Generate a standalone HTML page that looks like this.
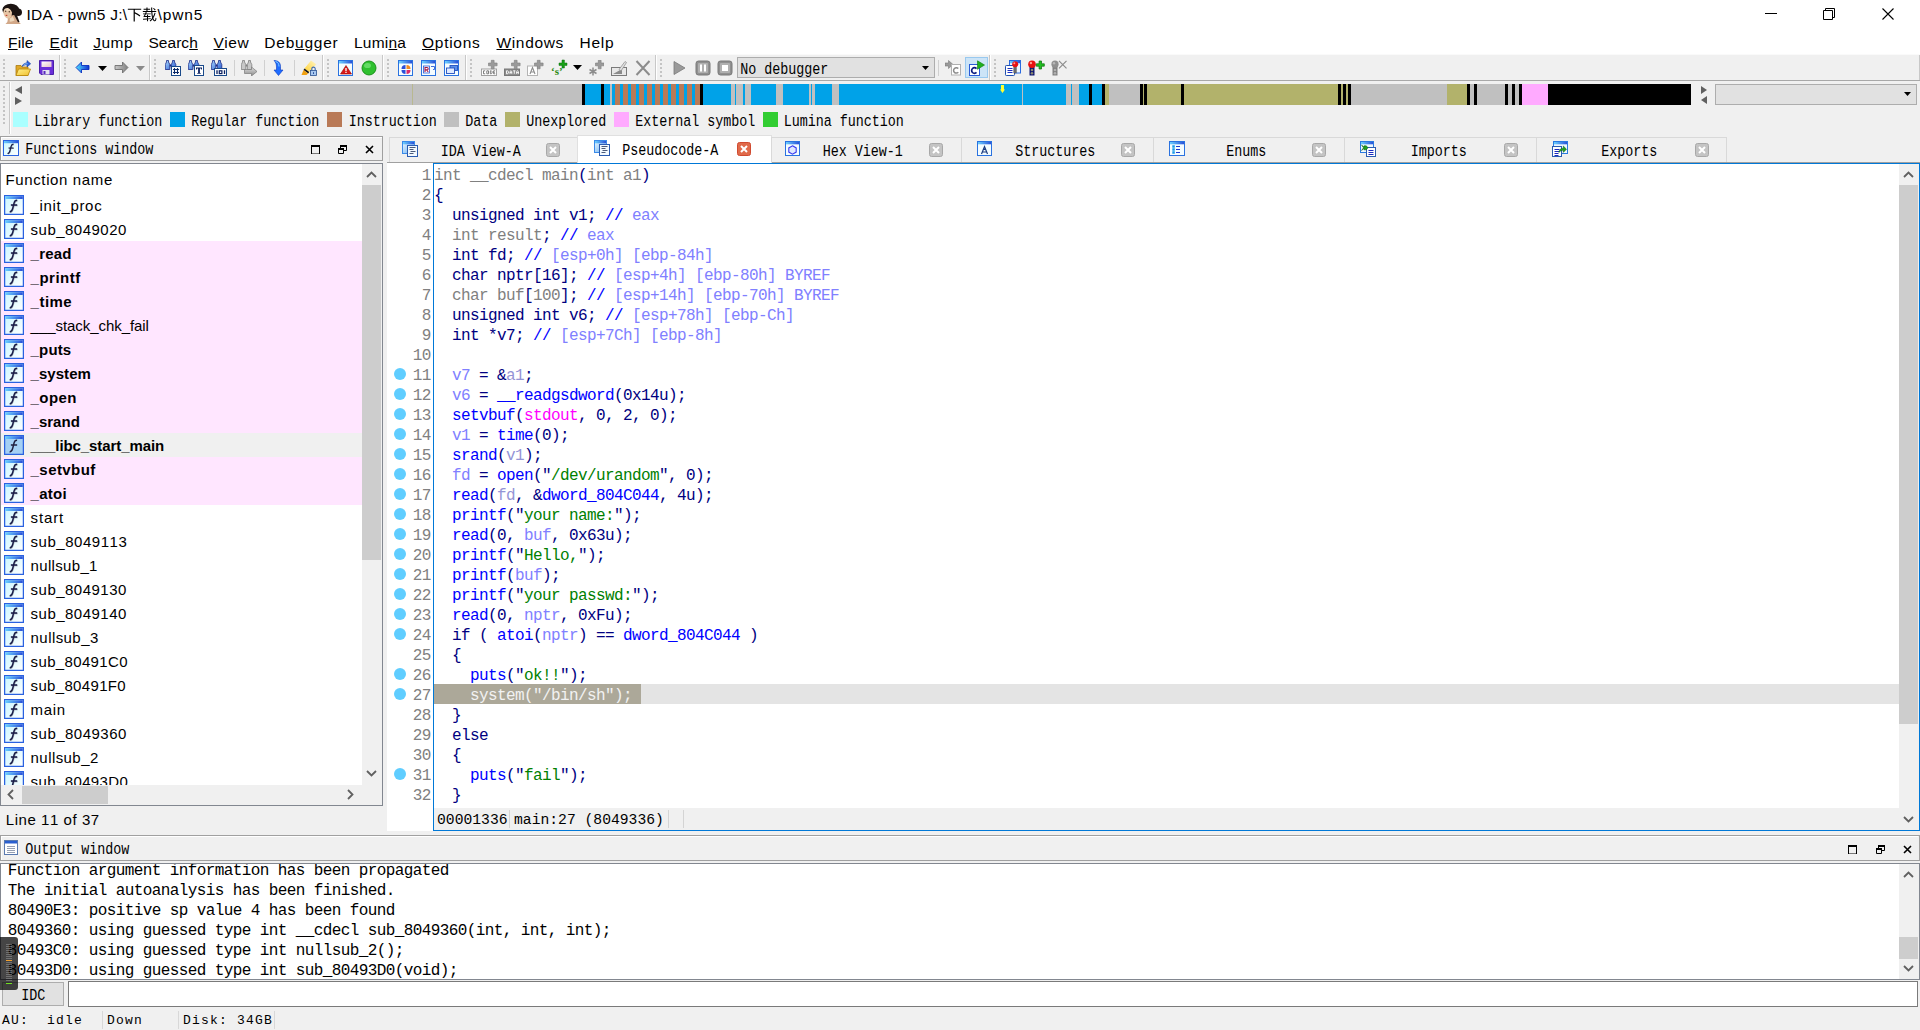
<!DOCTYPE html><html><head><meta charset="utf-8"><title>IDA - pwn5</title><style>
*{box-sizing:border-box;margin:0;padding:0}
html,body{width:1920px;height:1030px;overflow:hidden;background:#f0f0f0}
body{position:relative;font-family:"Liberation Sans",sans-serif;color:#000}
.a{position:absolute}
.t{position:absolute;white-space:pre}
.ui{font-family:"Liberation Sans",sans-serif}
.mono{font-family:"Liberation Mono",monospace}
.ss{font-family:"Liberation Mono",monospace;font-size:13.4px;letter-spacing:-.04px;transform:scaleY(1.17);transform-origin:0 13.6px;margin-top:2.700px;margin-left:-.7px}
.ui{font-kerning:none}
.code{font-family:"Liberation Mono",monospace;font-size:16px;letter-spacing:-.602px;line-height:20px;height:20px}
.G{color:#808080}.N{color:#000080}.B{color:#0000ff}.P{color:#8080ff}.S{color:#008000}.M{color:#ff00ff}.Q{color:#9494d6}.W{color:#f2f2f2}
u{text-decoration:underline;text-underline-offset:.8px;text-decoration-thickness:1px}
</style></head><body>
<svg width="0" height="0" style="position:absolute"><defs><linearGradient id="gbar" x1="0" x2="1"><stop offset="0" stop-color="#6ad0ff"/><stop offset="1" stop-color="#2a50d8"/></linearGradient><linearGradient id="gbino" x1="0" x2="1" y1="0" y2="1"><stop offset="0" stop-color="#a8d8ff"/><stop offset="1" stop-color="#2a5ad0"/></linearGradient><linearGradient id="ggray" x1="0" x2="0" y1="0" y2="1"><stop offset="0" stop-color="#e0e0e0"/><stop offset="1" stop-color="#8a8a8a"/></linearGradient><linearGradient id="gback" x1="0" x2="1"><stop offset="0" stop-color="#50e0ff"/><stop offset="1" stop-color="#1030d0"/></linearGradient><linearGradient id="gfold" x1="0" x2="1" y1="0" y2="1"><stop offset="0" stop-color="#fff08a"/><stop offset="1" stop-color="#f0c030"/></linearGradient><linearGradient id="glabel" x1="0" x2="1" y1="0" y2="1"><stop offset="0" stop-color="#ffffff"/><stop offset="1" stop-color="#e8c0c8"/></linearGradient><linearGradient id="ggray2" x1="0" x2="1"><stop offset="0" stop-color="#c8c8c8"/><stop offset="1" stop-color="#808080"/></linearGradient><linearGradient id="ghil" x1="1" x2="0" y1="0" y2="1"><stop offset="0" stop-color="#fff6c8"/><stop offset="1" stop-color="#ffd030"/></linearGradient><linearGradient id="gdoc" x1="0" x2="1" y1="0" y2="1"><stop offset="0" stop-color="#f0f8ff"/><stop offset="1" stop-color="#62aef2"/></linearGradient><linearGradient id="gfic" x1="0" x2="1" y1="0" y2="1"><stop offset="0" stop-color="#c8f6ff"/><stop offset="1" stop-color="#ffffff"/></linearGradient></defs></svg>
<div class="a" style="left:0;top:0;width:1920px;height:54px;background:#fff"></div>
<svg class="a" style="left:0;top:0" width="24" height="26" viewBox="0 0 24 26"><path d="M7.800 17l5.700-3 5.500 8q1 1.700 2 2H5.500q2.500-1.500 2.300-4.500z" fill="#d2a888"/><path d="M9.800 18.500q2-1 2.800-2.500l2 4.500q-2.800 1.500-5 1z" fill="#eed8bc"/><ellipse cx="10.800" cy="9.600" rx="8.400" ry="5.800" fill="#1c1412"/><circle cx="18.200" cy="12.200" r="3.800" fill="#1c1412"/><path d="M13 13l3.500 1 3 8-1.500.3z" fill="#1c1412"/><ellipse cx="7.700" cy="12.500" rx="4.300" ry="6" transform="rotate(-6 7.700 12.500)" fill="#e6c4a4"/><ellipse cx="7" cy="9.300" rx="2.800" ry="2" fill="#f0d8bc"/><path d="M2.600 11.500Q2.800 6.500 8 5.600q3.300-.3 4.800 2.800l-.3 6q-.8-5-4.500-6.300-3.300-.6-4.700 3.100z" fill="#1c1412"/><circle cx="5.700" cy="11.300" r=".7" fill="#4a3426"/><circle cx="9.300" cy="11.700" r=".7" fill="#4a3426"/><path d="M5.700 15.400h1.600" stroke="#c03828" stroke-width="1.100"/></svg>
<div class="t ui" id="title" style="left:26.500px;top:4.100px;font-size:15.500px;line-height:22px;letter-spacing:0.251px">IDA - pwn5 J:\</div>
<svg class="a" style="left:127px;top:6.500px" width="30" height="15.900" viewBox="0 0 2000 1060"><g transform="translate(0,880) scale(1,-1)"><path d="M55 766V691H441V-79H520V451C635 389 769 306 839 250L892 318C812 379 653 469 534 527L520 511V691H946V766Z"/><path transform="translate(1000,0)" d="M736 784C782 745 835 690 858 653L915 693C890 730 836 783 790 819ZM839 501C813 406 776 314 729 231C710 319 697 428 689 553H951V614H686C683 685 682 760 683 839H609C609 762 611 686 614 614H368V700H545V760H368V841H296V760H105V700H296V614H54V553H617C627 394 646 253 676 145C627 75 571 15 507 -31C525 -44 547 -66 560 -82C613 -41 661 9 704 64C741 -22 791 -72 856 -72C926 -72 951 -26 963 124C945 131 919 146 904 163C898 46 888 1 863 1C820 1 783 50 755 136C820 239 870 357 906 481ZM65 92 73 22 333 49V-76H403V56L585 75V137L403 120V214H562V279H403V360H333V279H194C216 312 237 350 258 391H583V453H288C300 479 311 505 321 531L247 551C237 518 224 484 211 453H69V391H183C166 357 152 331 144 319C128 292 113 272 98 269C107 250 117 215 121 200C130 208 160 214 202 214H333V114Z"/></g></svg>
<div class="t ui" id="title2" style="left:157.500px;top:4.100px;font-size:15.500px;line-height:22px;letter-spacing:0.888px">\pwn5</div>
<svg class="a" style="left:1765px;top:13px" width="12" height="1" viewBox="0 0 12 1" ><path d="M0 .5h12" stroke="#000" stroke-width="1"/></svg>
<svg class="a" style="left:1823px;top:8px" width="12" height="12" viewBox="0 0 12 12" ><path d="M.5 2.500h9v9h-9zM2.500 2.500v-2h9v9h-2" fill="none" stroke="#000" stroke-width="1"/></svg>
<svg class="a" style="left:1882px;top:8px" width="12" height="12" viewBox="0 0 12 12" ><path d="M.5 .5l11 11M11.500 .5l-11 11" stroke="#000" stroke-width="1.100"/></svg>
<div class="t ui mn" style="left:8.0px;top:32.100px;font-size:15.500px;line-height:22px;letter-spacing:0.156px"><u>F</u>ile</div>
<div class="t ui mn" style="left:49.5px;top:32.100px;font-size:15.500px;line-height:22px;letter-spacing:0.423px"><u>E</u>dit</div>
<div class="t ui mn" style="left:93.3px;top:32.100px;font-size:15.500px;line-height:22px;letter-spacing:0.449px"><u>J</u>ump</div>
<div class="t ui mn" style="left:148.5px;top:32.100px;font-size:15.500px;line-height:22px;letter-spacing:0.031px">Searc<u>h</u></div>
<div class="t ui mn" style="left:213.5px;top:32.100px;font-size:15.500px;line-height:22px;letter-spacing:0.521px"><u>V</u>iew</div>
<div class="t ui mn" style="left:264.3px;top:32.100px;font-size:15.500px;line-height:22px;letter-spacing:0.765px">Deb<u>u</u>gger</div>
<div class="t ui mn" style="left:354.0px;top:32.100px;font-size:15.500px;line-height:22px;letter-spacing:0.21px">Lumi<u>n</u>a</div>
<div class="t ui mn" style="left:422.0px;top:32.100px;font-size:15.500px;line-height:22px;letter-spacing:0.726px"><u>O</u>ptions</div>
<div class="t ui mn" style="left:496.5px;top:32.100px;font-size:15.500px;line-height:22px;letter-spacing:0.646px"><u>W</u>indows</div>
<div class="t ui mn" style="left:579.5px;top:32.100px;font-size:15.500px;line-height:22px;letter-spacing:0.73px">Help</div>
<div class="a" style="left:0;top:54px;width:1920px;height:27px;background:#f0f0f0;border-top:1px solid #fafafa;border-bottom:1px solid #a8a8a8"></div>
<div class="a" style="left:3px;top:59px;width:2px;height:18px;background:repeating-linear-gradient(#c4c4c4 0 2px,transparent 2px 4px)"></div>
<svg class="a" style="left:15px;top:60px" width="16" height="16" viewBox="0 0 16 16" ><path d="M1 5.500h5l1 1.500h6v8.500H1z" fill="#e0a828" stroke="#a87a10" stroke-width=".8"/><path d="M3.500 9H15.500L13 15.500H1z" fill="url(#gfold)" stroke="#b8860b" stroke-width=".8"/><path d="M7 6.500c1-3 4-3.700 5-3.700V.5L15.700 3.800 12 7V4.800c-2 0-3.500.5-5 1.700z" fill="#2a62e0" stroke="#123a9a" stroke-width=".5"/><path d="M8.500 5c1.300-1 2.500-1.300 4-1.300" fill="none" stroke="#9fd8ff" stroke-width=".8"/></svg>
<svg class="a" style="left:38.5px;top:60px" width="16" height="16" viewBox="0 0 16 16" ><path d="M.5.5h14v14H2L.5 13z" fill="#6a2ed8" stroke="#4a1fa8"/><rect x="2.500" y="1.500" width="10" height="5.500" fill="url(#glabel)"/><rect x="3.500" y="10" width="7" height="4.500" fill="#e4e4f0"/><rect x="4.500" y="11" width="2" height="3" fill="#5a28c0"/></svg>
<div class="a" style="left:59px;top:55px;width:2px;height:25px;border-left:1px solid #c8c8c8;border-right:1px solid #fff"></div>
<div class="a" style="left:64px;top:59px;width:2px;height:18px;background:repeating-linear-gradient(#c4c4c4 0 2px,transparent 2px 4px)"></div>
<svg class="a" style="left:75px;top:60px" width="16" height="16" viewBox="0 0 16 16" ><path d="M1 7.500L6.500 2v3.500H14v4H6.500V13z" fill="url(#gback)" stroke="#0a2fc0" stroke-width=".9"/></svg>
<svg class="a" style="left:98px;top:66px" width="9" height="5" viewBox="0 0 9 5" ><path d="M0 0h9L4.5 5z" fill="#000"/></svg>
<svg class="a" style="left:114px;top:60px" width="16" height="16" viewBox="0 0 16 16" ><path d="M14 7.500L8.500 2v3.500H1v4h7.500V13z" fill="url(#ggray2)" stroke="#707070" stroke-width=".9"/></svg>
<svg class="a" style="left:136px;top:66px" width="9" height="5" viewBox="0 0 9 5" ><path d="M0 0h9L4.5 5z" fill="#8a8a8a"/></svg>
<div class="a" style="left:149px;top:55px;width:2px;height:25px;border-left:1px solid #c8c8c8;border-right:1px solid #fff"></div>
<div class="a" style="left:154px;top:59px;width:2px;height:18px;background:repeating-linear-gradient(#c4c4c4 0 2px,transparent 2px 4px)"></div>
<svg class="a" style="left:165px;top:60px" width="16" height="16" viewBox="0 0 16 16" ><path d="M1.500.5h2V2l1.300 2.500v5H.3v-5L1.500 2zM7.500.5h2V2l1.300 2.500v5H6.300v-5L7.500 2z" fill="url(#gbino)" stroke="#1a2a88" stroke-width=".8"/><rect x="4.800" y="4.500" width="1.500" height="2" fill="#1a2a88"/><rect x="6.500" y="6.500" width="9" height="9" fill="#fff" stroke="#1a4a8a"/><path d="M9.500 8v6M12.500 8v6M8 9.500h6M8 12.500h6" stroke="#0a2a6a" stroke-width="1.100" fill="none"/></svg>
<svg class="a" style="left:188px;top:60px" width="16" height="16" viewBox="0 0 16 16" ><path d="M1.500.5h2V2l1.300 2.500v5H.3v-5L1.500 2zM7.500.5h2V2l1.300 2.500v5H6.300v-5L7.500 2z" fill="url(#gbino)" stroke="#1a2a88" stroke-width=".8"/><rect x="4.800" y="4.500" width="1.500" height="2" fill="#1a2a88"/><rect x="6.500" y="5.500" width="9" height="10" fill="#fff" stroke="#1a4a8a"/><path d="M8 7.500h6v2h-.8l-.3-.9h-1v4.300l1 .3v.6H9.100v-.6l1-.3V8.600h-1l-.3.900H8z" fill="#0a2060"/></svg>
<svg class="a" style="left:211px;top:60px" width="16" height="16" viewBox="0 0 16 16" ><path d="M1.500.5h2V2l1.300 2.500v5H.3v-5L1.500 2zM7.500.5h2V2l1.300 2.500v5H6.300v-5L7.500 2z" fill="url(#gbino)" stroke="#1a2a88" stroke-width=".8"/><rect x="4.800" y="4.500" width="1.500" height="2" fill="#1a2a88"/><rect x="3.500" y="8.500" width="12" height="7" fill="#fff" stroke="#1a4a8a"/><path d="M6 10.300v3.700M13.500 10.300v3.700" stroke="#0a2060" stroke-width="1.300"/><rect x="8.300" y="10.800" width="2.600" height="2.800" fill="none" stroke="#0a2060" stroke-width="1.200"/></svg>
<div class="a" style="left:234px;top:60px;width:1px;height:16px;background:#d0d0d0"></div>
<svg class="a" style="left:240.5px;top:60px" width="16" height="16" viewBox="0 0 16 16" ><path d="M1.500.5h2V2l1.300 2.500v5H.3v-5L1.500 2zM7.500.5h2V2l1.300 2.500v5H6.300v-5L7.500 2z" fill="#c8c8c8" stroke="#808080" stroke-width=".8"/><rect x="4.800" y="4.500" width="1.500" height="2" fill="#808080"/><path d="M3.500 9.500h7V7l5.500 4.500-5.500 4.500v-2.500h-7z" fill="url(#ggray)" stroke="#7a7a7a" stroke-width=".7"/></svg>
<div class="a" style="left:264px;top:60px;width:1px;height:16px;background:#d0d0d0"></div>
<svg class="a" style="left:271px;top:60px" width="16" height="16" viewBox="0 0 16 16" ><path d="M3 0.5c4 0 6.5 2 6.5 6v3.5H12L7.5 15.5 3 10h2.5V7c0-3-1-5-2.5-6.5z" fill="#1f6cff" stroke="#0a3ac0" stroke-width=".6"/><path d="M4.5 1.5c2.5.5 3.5 2.5 3.5 5" fill="none" stroke="#7fd0ff" stroke-width="1"/></svg>
<div class="a" style="left:294px;top:60px;width:1px;height:16px;background:#d0d0d0"></div>
<svg class="a" style="left:301px;top:60px" width="16" height="16" viewBox="0 0 16 16" ><path d="M10 .5l5.300 3.800L8.200 12 3.500 8.500z" fill="url(#ghil)"/><path d="M3.500 8.500L8.200 12l-1 1.400L2.500 9.900z" fill="#181818"/><path d="M2.500 9.900l4.700 3.500L5.500 15H.5z" fill="#f0a010"/><rect x="9.500" y="10.500" width="6" height="5" fill="#a8c8f0" stroke="#2a5090" stroke-width=".8"/><path d="M10.800 10.500V8.800a1.700 1.700 0 013.400 0v1.700" fill="none" stroke="#3a68b0" stroke-width="1.100"/><rect x="12" y="12.300" width="1" height="1.500" fill="#123a8a"/></svg>
<div class="a" style="left:322px;top:55px;width:2px;height:25px;border-left:1px solid #c8c8c8;border-right:1px solid #fff"></div>
<div class="a" style="left:327px;top:59px;width:2px;height:18px;background:repeating-linear-gradient(#c4c4c4 0 2px,transparent 2px 4px)"></div>
<svg class="a" style="left:338px;top:60px" width="16" height="16" viewBox="0 0 16 16" ><rect x=".5" y=".5" width="14" height="15" fill="#f4fcff" stroke="#2a72e0"/><rect x="1" y="1" width="13" height="2.500" fill="url(#gbar)"/><path d="M8 5.5L13.5 14h-11z" fill="#d81818" stroke="#900" stroke-width=".6"/><path d="M8 8v3.2M8 12v1" stroke="#fff" stroke-width="1.3"/></svg>
<svg class="a" style="left:361px;top:60px" width="16" height="16" viewBox="0 0 16 16" ><circle cx="8" cy="8" r="7" fill="#2fc02f" stroke="#128a12" stroke-width=".9"/><ellipse cx="6.5" cy="5.5" rx="3.5" ry="2.6" fill="#8ff08f" opacity=".55"/></svg>
<div class="a" style="left:382px;top:55px;width:2px;height:25px;border-left:1px solid #c8c8c8;border-right:1px solid #fff"></div>
<div class="a" style="left:387px;top:59px;width:2px;height:18px;background:repeating-linear-gradient(#c4c4c4 0 2px,transparent 2px 4px)"></div>
<svg class="a" style="left:398px;top:60px" width="16" height="16" viewBox="0 0 16 16" ><rect x=".5" y=".5" width="14" height="15" fill="#f4fcff" stroke="#2a72e0"/><rect x="1" y="1" width="13" height="2.500" fill="url(#gbar)"/><path d="M7.5 9V5A4 4 0 003.5 9z" fill="#2a4fd8"/><path d="M8.5 9V5a4 4 0 014 4z" fill="#f08a20"/><path d="M7.5 10v4a4 4 0 01-4-4z" fill="#2a4fd8"/><path d="M8.5 10v4a4 4 0 004-4z" fill="#d82a6a"/></svg>
<svg class="a" style="left:421px;top:60px" width="16" height="16" viewBox="0 0 16 16" ><rect x=".5" y=".5" width="14" height="15" fill="#f4fcff" stroke="#2a72e0"/><rect x="1" y="1" width="13" height="2.500" fill="url(#gbar)"/><rect x="2.5" y="6" width="6" height="7" fill="#fff" stroke="#2a5bd7" stroke-width=".8"/><path d="M4 12V7.5h2a1.2 1.2 0 010 2.4H4M5.8 10l1.4 2" fill="none" stroke="#a01848" stroke-width="1.1"/><path d="M10 6.5h3.5v3H12" fill="none" stroke="#2a5bd7" stroke-width=".9"/></svg>
<svg class="a" style="left:444px;top:60px" width="16" height="16" viewBox="0 0 16 16" ><rect x=".5" y=".5" width="14" height="15" fill="#f4fcff" stroke="#2a72e0"/><rect x="1" y="1" width="13" height="2.500" fill="url(#gbar)"/><rect x="6" y="5.5" width="7.5" height="5" fill="#5a8fe8" stroke="#1f4fc0" stroke-width=".9"/><rect x="2.5" y="8" width="8" height="5.5" fill="#dfeaff" stroke="#1f4fc0" stroke-width=".9"/></svg>
<div class="a" style="left:465px;top:55px;width:2px;height:25px;border-left:1px solid #c8c8c8;border-right:1px solid #fff"></div>
<div class="a" style="left:470px;top:59px;width:2px;height:18px;background:repeating-linear-gradient(#c4c4c4 0 2px,transparent 2px 4px)"></div>
<svg class="a" style="left:481px;top:60px" width="16" height="16" viewBox="0 0 16 16" overflow="visible"><rect x=".5" y="9" width="15" height="6.500" fill="#fff" stroke="#a0a0a0"/><path d="M4.200 10.800H2.500v3h1.700M5.800 10.800h1.700v3H5.800zM9.300 10.800v3h1.100l.7-.8v-1.400l-.7-.8zM14.200 10.800h-1.600v3h1.600M12.600 12.300h1.200" fill="none" stroke="#707070" stroke-width=".9"/><path d="M7.500 3h2.800V.3h2.800V3h3v2.800h-3v3h-2.800v-3H7.500z" fill="#9a9a9a" stroke="#7c7c7c" stroke-width=".6"/></svg>
<svg class="a" style="left:504px;top:60px" width="16" height="16" viewBox="0 0 16 16" overflow="visible"><rect x=".5" y="9" width="15" height="6.500" fill="#8c8c8c" stroke="#787878"/><path d="M2.500 10.800v3h1.200l.7-.8v-1.400l-.7-.8zM6 13.800v-2.200l.9-.8.9.8v2.200M6 12.600h1.800M9.200 10.800h2.200M10.300 10.800v3M12.600 13.800v-2.200l.9-.8.9.8v2.200M12.600 12.600h1.800" fill="none" stroke="#fff" stroke-width=".9"/><path d="M7.500 3h2.800V.3h2.800V3h3v2.800h-3v3h-2.800v-3H7.500z" fill="#9a9a9a" stroke="#7c7c7c" stroke-width=".6"/></svg>
<svg class="a" style="left:527px;top:60px" width="16" height="16" viewBox="0 0 16 16" overflow="visible"><rect x=".5" y="6" width="10" height="9.500" fill="#fff" stroke="#b4b4b4"/><path d="M3 14l2.500-6.500L8 14M3.800 12h3.400" fill="none" stroke="#8c8c8c" stroke-width="1.100"/><path d="M7.500 3h2.800V.3h2.800V3h3v2.800h-3v3h-2.800v-3H7.500z" fill="#9a9a9a" stroke="#7c7c7c" stroke-width=".6"/></svg>
<svg class="a" style="left:549.5px;top:60px" width="16" height="16" viewBox="0 0 16 16" overflow="visible"><path d="M9 3h3V0h2.4v3H17v2.4h-2.6V8H12V5.400H9z" fill="#18a018" stroke="#0a6a0a" stroke-width=".5"/><text x="1" y="15" font-family="Liberation Serif" font-weight="bold" font-size="11" fill="#2a8a10">‘s’</text></svg>
<svg class="a" style="left:573px;top:65px" width="9" height="5" viewBox="0 0 9 5" ><path d="M0 0h9L4.5 5z" fill="#000"/></svg>
<svg class="a" style="left:588px;top:60px" width="16" height="16" viewBox="0 0 16 16" ><path d="M7.500 3h2.800V.3h2.800V3h3v2.800h-3v3h-2.800v-3H7.500z" fill="#9a9a9a" stroke="#7c7c7c" stroke-width=".6"/><path d="M5 7.500v8M1.500 9.500l7 4M8.500 9.500l-7 4" stroke="#8c8c8c" stroke-width="1.500" fill="none"/></svg>
<svg class="a" style="left:611px;top:60px" width="16" height="16" viewBox="0 0 16 16" ><rect x=".5" y="7.5" width="15" height="8" fill="#e8e8e8" stroke="#7a7a7a"/><path d="M2 14l9-5v5z" fill="#8a8a8a"/><path d="M8 9.500L14 1.500l1.500 1L10 11z" fill="#e0e0e0" stroke="#8a8a8a" stroke-width=".7"/></svg>
<svg class="a" style="left:634.5px;top:60px" width="16" height="16" viewBox="0 0 16 16" ><path d="M1.500 1l13 14M14.500 1l-13 14" stroke="#8c8c8c" stroke-width="2" fill="none"/></svg>
<div class="a" style="left:655px;top:55px;width:2px;height:25px;border-left:1px solid #c8c8c8;border-right:1px solid #fff"></div>
<div class="a" style="left:660px;top:59px;width:2px;height:18px;background:repeating-linear-gradient(#c4c4c4 0 2px,transparent 2px 4px)"></div>
<svg class="a" style="left:671px;top:60px" width="16" height="16" viewBox="0 0 16 16" ><path d="M3 1.500L14 8 3 14.500z" fill="#9a9a9a" stroke="#7a7a7a" stroke-width=".8"/></svg>
<svg class="a" style="left:694.5px;top:60px" width="16" height="16" viewBox="0 0 16 16" ><rect x="1" y="1" width="14" height="14" rx="2.500" fill="#909090" stroke="#787878"/><rect x="3" y="3" width="10" height="10" rx="1" fill="#b0b0b0"/><rect x="5" y="4.500" width="2" height="7" fill="#fff"/><rect x="9" y="4.500" width="2" height="7" fill="#fff"/></svg>
<svg class="a" style="left:717px;top:60px" width="16" height="16" viewBox="0 0 16 16" ><rect x="1" y="1" width="14" height="14" rx="2.500" fill="#909090" stroke="#787878"/><rect x="3" y="3" width="10" height="10" rx="1" fill="#b0b0b0"/><rect x="5" y="5" width="6" height="6" fill="#fff"/></svg>
<div class="a" style="left:737px;top:57px;width:198px;height:21px;background:#e1e1e1;border:1px solid #adadad"></div>
<div class="t ss" style="left:741px;top:58px;line-height:20px">No debugger</div>
<svg class="a" style="left:922px;top:65.5px" width="7" height="4" viewBox="0 0 7 4" ><path d="M0 0h7L3.5 4z" fill="#000"/></svg>
<div class="a" style="left:938px;top:60px;width:1px;height:16px;background:#d0d0d0"></div>
<svg class="a" style="left:945px;top:60px" width="16" height="16" viewBox="0 0 16 16" ><path d="M0 3h3.500V.5L8 4.500 3.500 8.500V6H0z" fill="#9a9a9a" stroke="#7a7a7a" stroke-width=".6"/><rect x="6.500" y="4.500" width="9" height="10.500" fill="#fff" stroke="#b0b0b0"/><path d="M13.300 8.600a2.700 2.700 0 100 3.600" fill="none" stroke="#8a8a8a" stroke-width="1.500"/></svg>
<div class="a" style="left:965px;top:57px;width:23px;height:21px;background:#cce4f7;border:1px solid #99c9ef"></div>
<svg class="a" style="left:968.5px;top:60px" width="16" height="16" viewBox="0 0 16 16" ><rect x=".5" y="4.500" width="10" height="11" fill="#fff" stroke="#2a5bd7"/><path d="M7.500 8.600a2.800 2.800 0 100 3.800" fill="none" stroke="#0a1a80" stroke-width="1.700"/><path d="M8.500 0.800L15.500 5l-7 4.300z" fill="#20b020" stroke="#0a7a0a" stroke-width=".6"/></svg>
<div class="a" style="left:989px;top:55px;width:2px;height:25px;border-left:1px solid #c8c8c8;border-right:1px solid #fff"></div>
<div class="a" style="left:994px;top:59px;width:2px;height:18px;background:repeating-linear-gradient(#c4c4c4 0 2px,transparent 2px 4px)"></div>
<svg class="a" style="left:1005px;top:60px" width="16" height="16" viewBox="0 0 16 16" overflow="visible"><rect x="4.500" y=".5" width="11" height="12.500" fill="#eef6ff" stroke="#2a6ae0"/><rect x="5" y="1" width="10" height="2.300" fill="url(#gbar)"/><rect x=".5" y="5.500" width="9" height="10" rx=".8" fill="#fff" stroke="#1f4fb0"/><path d="M2.500 8.500h5M2.500 10.500h5M2.500 12.500h5" stroke="#1a2fc0" stroke-width="1"/><rect x="8.800" y="6" width="2.600" height="7" fill="#6a6a6a" stroke="#4a4a4a" stroke-width=".4"/><circle cx="10.200" cy="4.200" r="3" fill="#e81010"/><circle cx="9.300" cy="3.300" r="1" fill="#ff9a90"/></svg>
<svg class="a" style="left:1028px;top:60px" width="16" height="16" viewBox="0 0 16 16" overflow="visible"><rect x="1.500" y="6" width="5" height="9.500" fill="#0c1470"/><circle cx="4" cy="10" r="1.300" fill="#8a8a70"/><circle cx="4" cy="13.200" r="1.300" fill="#8a8a70"/><circle cx="4" cy="4.200" r="3.800" fill="#e81010"/><circle cx="2.900" cy="3" r="1.200" fill="#ff9a90"/><path d="M8.300 3.800h2.800V1h2.400v2.800h2.800v2.400h-2.800V9h-2.400V6.200H8.300z" fill="#20c020" stroke="#0a6a0a" stroke-width=".7"/></svg>
<svg class="a" style="left:1051px;top:60px" width="16" height="16" viewBox="0 0 16 16" overflow="visible"><rect x="1.500" y="6" width="5" height="9.500" fill="#808080"/><circle cx="4" cy="10" r="1.300" fill="#b0b0b0"/><circle cx="4" cy="13.200" r="1.300" fill="#b0b0b0"/><circle cx="4" cy="4.200" r="3.600" fill="#909090"/><circle cx="3" cy="3.200" r="1.200" fill="#b8b8b8"/><path d="M8 .8l7.500 7.500M15.500 .8L8 8.300" stroke="#8c8c8c" stroke-width="1.200"/></svg>
<div class="a" style="left:1919px;top:55px;width:1px;height:25px;background:#c8c8c8"></div>
<div class="a" style="left:3px;top:86px;width:2px;height:38px;background:repeating-linear-gradient(#c4c4c4 0 2px,transparent 2px 4px)"></div>
<div class="a" style="left:9px;top:82px;width:2px;height:52px;border-left:1px solid #c8c8c8;border-right:1px solid #fff"></div>
<svg class="a" style="left:15px;top:86px" width="7" height="8" viewBox="0 0 7 8" ><path d="M7 0v8L0 4z" fill="#606060"/></svg>
<svg class="a" style="left:15px;top:96.5px" width="7" height="8" viewBox="0 0 7 8" ><path d="M0 0v8l7-4z" fill="#606060"/></svg>
<div class="a" id="nav" style="left:30px;top:84px;width:1661px;height:21px;background:linear-gradient(90deg,#c0c0c0 0px 382px,#b8b890 382px 383px,#c0c0c0 383px 552px,#000 552px 555px,#00a2e8 555px 571px,#000 571px 574px,#00a2e8 574px 580px,#c0c0c0 580px 582px,#00a2e8 582px 585px,#b97a57 585px 590px,#00a2e8 590px 593px,#b97a57 593px 598px,#00a2e8 598px 601px,#b97a57 601px 606px,#00a2e8 606px 609px,#b97a57 609px 614px,#00a2e8 614px 617px,#b97a57 617px 622px,#00a2e8 622px 625px,#b97a57 625px 630px,#00a2e8 630px 633px,#b97a57 633px 638px,#00a2e8 638px 641px,#b97a57 641px 646px,#00a2e8 646px 649px,#b97a57 649px 654px,#00a2e8 654px 657px,#b97a57 657px 662px,#00a2e8 662px 665px,#b97a57 665px 670px,#000 670px 673px,#00a2e8 673px 701px,#c0c0c0 701px 705px,#00a2e8 705px 706.5px,#c0c0c0 706.5px 713px,#00a2e8 713px 715px,#c0c0c0 715px 721px,#00a2e8 721px 746px,#c0c0c0 746px 753px,#00a2e8 753px 779px,#c0c0c0 779px 781px,#00a2e8 781px 782.5px,#c0c0c0 782.5px 785px,#00a2e8 785px 802px,#c0c0c0 802px 809px,#00a2e8 809px 992px,#c0c0c0 992px 993px,#00a2e8 993px 1036px,#c0c0c0 1036px 1041px,#00a2e8 1041px 1042px,#c0c0c0 1042px 1049px,#00a2e8 1049px 1059px,#000 1059px 1062px,#00a2e8 1062px 1072px,#000 1072px 1075px,#b2b26b 1075px 1079px,#c0c0c0 1079px 1110px,#000 1110px 1113px,#b2b26b 1113px 1114px,#000 1114px 1117px,#b2b26b 1117px 1151px,#000 1151px 1154px,#b2b26b 1154px 1308px,#000 1308px 1311px,#b2b26b 1311px 1313px,#000 1313px 1316px,#b2b26b 1316px 1318px,#000 1318px 1321px,#c0c0c0 1321px 1417px,#b2b26b 1417px 1437px,#000 1437px 1440px,#c0c0c0 1440px 1444px,#000 1444px 1447px,#c0c0c0 1447px 1475px,#000 1475px 1478px,#c0c0c0 1478px 1482px,#000 1482px 1485px,#c0c0c0 1485px 1489px,#000 1489px 1492px,#ffaaff 1492px 1518px,#000 1518px 1661px)"></div>
<svg class="a" style="left:1000px;top:85px" width="5" height="8" viewBox="0 0 5 8" ><path d="M1 0h3v4.500h1L2.500 8 0 4.500h1z" fill="#ffff30"/></svg>
<svg class="a" style="left:1701px;top:86px" width="6" height="8" viewBox="0 0 6 8" ><path d="M0 0v8l6-4z" fill="#606060"/></svg>
<svg class="a" style="left:1701px;top:96px" width="6" height="8" viewBox="0 0 6 8" ><path d="M6 0v8L0 4z" fill="#606060"/></svg>
<div class="a" style="left:1715px;top:84px;width:202px;height:21px;background:#e1e1e1;border:1px solid #adadad"></div>
<svg class="a" style="left:1904px;top:92px" width="7" height="4" viewBox="0 0 7 4" ><path d="M0 0h7L3.5 4z" fill="#000"/></svg>
<div class="a" style="left:13px;top:112px;width:15px;height:15px;background:#aaffff"></div>
<div class="t ss" style="left:35px;top:110px;line-height:20px">Library function</div>
<div class="a" style="left:170px;top:112px;width:15px;height:15px;background:#00a2e8"></div>
<div class="t ss" style="left:192px;top:110px;line-height:20px">Regular function</div>
<div class="a" style="left:327px;top:112px;width:15px;height:15px;background:#b97a57"></div>
<div class="t ss" style="left:349.5px;top:110px;line-height:20px">Instruction</div>
<div class="a" style="left:444px;top:112px;width:15px;height:15px;background:#c0c0c0"></div>
<div class="t ss" style="left:466px;top:110px;line-height:20px">Data</div>
<div class="a" style="left:505px;top:112px;width:15px;height:15px;background:#b2b26b"></div>
<div class="t ss" style="left:527px;top:110px;line-height:20px">Unexplored</div>
<div class="a" style="left:614px;top:112px;width:15px;height:15px;background:#ffaaff"></div>
<div class="t ss" style="left:636px;top:110px;line-height:20px">External symbol</div>
<div class="a" style="left:763px;top:112px;width:15px;height:15px;background:#32cd32"></div>
<div class="t ss" style="left:784.5px;top:110px;line-height:20px">Lumina function</div>
<div class="a" style="left:0px;top:136px;width:383px;height:25px;background:#f0f0f0;border:1px solid #a0a0a0"></div>
<div class="a" style="left:1px;top:137px;width:381px;height:23px;border:1px solid #fff;border-right:none;border-bottom:none"></div>
<svg class="a" style="left:3px;top:140px" width="16" height="16" viewBox="0 0 16 16" ><rect x=".5" y=".5" width="15" height="15" fill="url(#gfic)" stroke="#2a62e0"/><rect x="1" y="1" width="14" height="2.200" fill="url(#gbar)"/><path d="M4.900 13.900c1.500 0 2-1 2.500-3l1-4c.4-1.600 1-2.500 2.500-2.300M5.900 8.400h5" fill="none" stroke="#9aa0a8" stroke-width="1.100"/><path d="M4.500 13.500c1.500 0 2-1 2.500-3l1-4c.4-1.600 1-2.500 2.500-2.300M5.500 8h5" fill="none" stroke="#181c48" stroke-width="1.150"/></svg>
<div class="t ss" style="left:26px;top:138px;line-height:20px">Functions window</div>
<svg class="a" style="left:311px;top:145px" width="9" height="9" viewBox="0 0 9 9" ><path d="M1 1.500h7M.5 1v8h8V1" fill="none" stroke="#000" stroke-width="1"/><path d="M0 1h9" stroke="#000" stroke-width="2"/></svg>
<svg class="a" style="left:338px;top:145px" width="9" height="9" viewBox="0 0 9 9" ><path d="M.5 3.500h5v5h-5zM2.500 3.500v-3h6v5h-3" fill="none" stroke="#000" stroke-width="1"/><path d="M2 1h7M0 4h6" stroke="#000" stroke-width="2"/></svg>
<svg class="a" style="left:365px;top:145px" width="9" height="9" viewBox="0 0 9 9" ><path d="M1 1l7 7M8 1L1 8" stroke="#000" stroke-width="1.600"/></svg>
<div class="a" style="left:0px;top:163px;width:383px;height:643px;background:#fff;border:1px solid #828790"></div>
<div class="t ui" id="fhdr" style="left:5.500px;top:170.300px;font-size:15px;line-height:20px;letter-spacing:0.629px">Function name</div>
<div class="a" style="left:1px;top:193px;width:361px;height:592px;overflow:hidden">
<div class="a" style="left:0;top:0px;width:361px;height:24px;"><svg class="a" style="left:3px;top:2px" width="20" height="20" viewBox="0 0 16 16" ><rect x=".5" y=".5" width="15" height="15" fill="url(#gfic)" stroke="#2a62e0"/><rect x="1" y="1" width="14" height="2.200" fill="url(#gbar)"/><path d="M4.900 13.900c1.500 0 2-1 2.500-3l1-4c.4-1.600 1-2.500 2.500-2.300M5.900 8.400h5" fill="none" stroke="#9aa0a8" stroke-width="1.100"/><path d="M4.500 13.500c1.500 0 2-1 2.500-3l1-4c.4-1.600 1-2.500 2.500-2.300M5.500 8h5" fill="none" stroke="#181c48" stroke-width="1.150"/></svg><div class="t ui fn" style="left:29.600px;top:2.300px;font-size:15px;line-height:22px;letter-spacing:0.666px;">_init_proc</div></div>
<div class="a" style="left:0;top:24px;width:361px;height:24px;"><svg class="a" style="left:3px;top:2px" width="20" height="20" viewBox="0 0 16 16" ><rect x=".5" y=".5" width="15" height="15" fill="url(#gfic)" stroke="#2a62e0"/><rect x="1" y="1" width="14" height="2.200" fill="url(#gbar)"/><path d="M4.900 13.900c1.500 0 2-1 2.500-3l1-4c.4-1.600 1-2.500 2.500-2.300M5.900 8.400h5" fill="none" stroke="#9aa0a8" stroke-width="1.100"/><path d="M4.500 13.500c1.500 0 2-1 2.500-3l1-4c.4-1.600 1-2.500 2.500-2.300M5.500 8h5" fill="none" stroke="#181c48" stroke-width="1.150"/></svg><div class="t ui fn" style="left:29.600px;top:2.300px;font-size:15px;line-height:22px;letter-spacing:0.479px;">sub_8049020</div></div>
<div class="a" style="left:0;top:48px;width:361px;height:24px;background:#ffe6ff;"><svg class="a" style="left:3px;top:2px" width="20" height="20" viewBox="0 0 16 16" ><rect x=".5" y=".5" width="15" height="15" fill="url(#gfic)" stroke="#2a62e0"/><rect x="1" y="1" width="14" height="2.200" fill="url(#gbar)"/><path d="M4.900 13.900c1.500 0 2-1 2.500-3l1-4c.4-1.600 1-2.500 2.500-2.300M5.900 8.400h5" fill="none" stroke="#9aa0a8" stroke-width="1.100"/><path d="M4.500 13.500c1.500 0 2-1 2.500-3l1-4c.4-1.600 1-2.500 2.500-2.300M5.500 8h5" fill="none" stroke="#181c48" stroke-width="1.150"/></svg><div class="t ui fn" style="left:29.600px;top:2.300px;font-size:15px;line-height:22px;letter-spacing:0.214px;font-weight:bold;">_read</div></div>
<div class="a" style="left:0;top:72px;width:361px;height:24px;background:#ffe6ff;"><svg class="a" style="left:3px;top:2px" width="20" height="20" viewBox="0 0 16 16" ><rect x=".5" y=".5" width="15" height="15" fill="url(#gfic)" stroke="#2a62e0"/><rect x="1" y="1" width="14" height="2.200" fill="url(#gbar)"/><path d="M4.900 13.900c1.500 0 2-1 2.500-3l1-4c.4-1.600 1-2.500 2.500-2.300M5.900 8.400h5" fill="none" stroke="#9aa0a8" stroke-width="1.100"/><path d="M4.500 13.500c1.500 0 2-1 2.500-3l1-4c.4-1.600 1-2.500 2.500-2.300M5.500 8h5" fill="none" stroke="#181c48" stroke-width="1.150"/></svg><div class="t ui fn" style="left:29.600px;top:2.300px;font-size:15px;line-height:22px;letter-spacing:0.505px;font-weight:bold;">_printf</div></div>
<div class="a" style="left:0;top:96px;width:361px;height:24px;background:#ffe6ff;"><svg class="a" style="left:3px;top:2px" width="20" height="20" viewBox="0 0 16 16" ><rect x=".5" y=".5" width="15" height="15" fill="url(#gfic)" stroke="#2a62e0"/><rect x="1" y="1" width="14" height="2.200" fill="url(#gbar)"/><path d="M4.900 13.900c1.500 0 2-1 2.500-3l1-4c.4-1.600 1-2.500 2.500-2.300M5.900 8.400h5" fill="none" stroke="#9aa0a8" stroke-width="1.100"/><path d="M4.500 13.500c1.500 0 2-1 2.500-3l1-4c.4-1.600 1-2.500 2.500-2.300M5.500 8h5" fill="none" stroke="#181c48" stroke-width="1.150"/></svg><div class="t ui fn" style="left:29.600px;top:2.300px;font-size:15px;line-height:22px;letter-spacing:0.483px;font-weight:bold;">_time</div></div>
<div class="a" style="left:0;top:120px;width:361px;height:24px;background:#ffe6ff;"><svg class="a" style="left:3px;top:2px" width="20" height="20" viewBox="0 0 16 16" ><rect x=".5" y=".5" width="15" height="15" fill="url(#gfic)" stroke="#2a62e0"/><rect x="1" y="1" width="14" height="2.200" fill="url(#gbar)"/><path d="M4.900 13.900c1.500 0 2-1 2.500-3l1-4c.4-1.600 1-2.500 2.500-2.300M5.900 8.400h5" fill="none" stroke="#9aa0a8" stroke-width="1.100"/><path d="M4.500 13.500c1.500 0 2-1 2.500-3l1-4c.4-1.600 1-2.500 2.500-2.300M5.500 8h5" fill="none" stroke="#181c48" stroke-width="1.150"/></svg><div class="t ui fn" style="left:29.600px;top:2.300px;font-size:15px;line-height:22px;letter-spacing:-0.055px;">___stack_chk_fail</div></div>
<div class="a" style="left:0;top:144px;width:361px;height:24px;background:#ffe6ff;"><svg class="a" style="left:3px;top:2px" width="20" height="20" viewBox="0 0 16 16" ><rect x=".5" y=".5" width="15" height="15" fill="url(#gfic)" stroke="#2a62e0"/><rect x="1" y="1" width="14" height="2.200" fill="url(#gbar)"/><path d="M4.900 13.900c1.500 0 2-1 2.500-3l1-4c.4-1.600 1-2.500 2.500-2.300M5.900 8.400h5" fill="none" stroke="#9aa0a8" stroke-width="1.100"/><path d="M4.500 13.500c1.500 0 2-1 2.500-3l1-4c.4-1.600 1-2.500 2.500-2.300M5.500 8h5" fill="none" stroke="#181c48" stroke-width="1.150"/></svg><div class="t ui fn" style="left:29.600px;top:2.300px;font-size:15px;line-height:22px;letter-spacing:0.139px;font-weight:bold;">_puts</div></div>
<div class="a" style="left:0;top:168px;width:361px;height:24px;background:#ffe6ff;"><svg class="a" style="left:3px;top:2px" width="20" height="20" viewBox="0 0 16 16" ><rect x=".5" y=".5" width="15" height="15" fill="url(#gfic)" stroke="#2a62e0"/><rect x="1" y="1" width="14" height="2.200" fill="url(#gbar)"/><path d="M4.900 13.900c1.500 0 2-1 2.500-3l1-4c.4-1.600 1-2.500 2.500-2.300M5.900 8.400h5" fill="none" stroke="#9aa0a8" stroke-width="1.100"/><path d="M4.500 13.500c1.500 0 2-1 2.500-3l1-4c.4-1.600 1-2.500 2.500-2.300M5.500 8h5" fill="none" stroke="#181c48" stroke-width="1.150"/></svg><div class="t ui fn" style="left:29.600px;top:2.300px;font-size:15px;line-height:22px;letter-spacing:0.036px;font-weight:bold;">_system</div></div>
<div class="a" style="left:0;top:192px;width:361px;height:24px;background:#ffe6ff;"><svg class="a" style="left:3px;top:2px" width="20" height="20" viewBox="0 0 16 16" ><rect x=".5" y=".5" width="15" height="15" fill="url(#gfic)" stroke="#2a62e0"/><rect x="1" y="1" width="14" height="2.200" fill="url(#gbar)"/><path d="M4.900 13.900c1.500 0 2-1 2.500-3l1-4c.4-1.600 1-2.500 2.500-2.300M5.900 8.400h5" fill="none" stroke="#9aa0a8" stroke-width="1.100"/><path d="M4.500 13.500c1.500 0 2-1 2.500-3l1-4c.4-1.600 1-2.500 2.500-2.300M5.500 8h5" fill="none" stroke="#181c48" stroke-width="1.150"/></svg><div class="t ui fn" style="left:29.600px;top:2.300px;font-size:15px;line-height:22px;letter-spacing:0.405px;font-weight:bold;">_open</div></div>
<div class="a" style="left:0;top:216px;width:361px;height:24px;background:#ffe6ff;"><svg class="a" style="left:3px;top:2px" width="20" height="20" viewBox="0 0 16 16" ><rect x=".5" y=".5" width="15" height="15" fill="url(#gfic)" stroke="#2a62e0"/><rect x="1" y="1" width="14" height="2.200" fill="url(#gbar)"/><path d="M4.900 13.900c1.500 0 2-1 2.500-3l1-4c.4-1.600 1-2.500 2.500-2.300M5.900 8.400h5" fill="none" stroke="#9aa0a8" stroke-width="1.100"/><path d="M4.500 13.500c1.500 0 2-1 2.500-3l1-4c.4-1.600 1-2.500 2.500-2.300M5.500 8h5" fill="none" stroke="#181c48" stroke-width="1.150"/></svg><div class="t ui fn" style="left:29.600px;top:2.300px;font-size:15px;line-height:22px;letter-spacing:0.002px;font-weight:bold;">_srand</div></div>
<div class="a" style="left:0;top:240px;width:361px;height:24px;background:#f0f0f0;"><svg class="a" style="left:3px;top:2px" width="20" height="20" viewBox="0 0 16 16" ><rect x=".5" y=".5" width="15" height="15" fill="#a4d0f4" stroke="#2a62e0"/><rect x="1" y="1" width="14" height="2.200" fill="url(#gbar)"/><path d="M4.500 13.500c1.500 0 2-1 2.500-3l1-4c.4-1.600 1-2.500 2.500-2.300M5.500 8h5" fill="none" stroke="#202040" stroke-width="1.200"/></svg><div class="t ui fn" style="left:29.600px;top:2.300px;font-size:15px;line-height:22px;letter-spacing:-0.088px;font-weight:bold;">___libc_start_main</div></div>
<div class="a" style="left:0;top:264px;width:361px;height:24px;background:#ffe6ff;"><svg class="a" style="left:3px;top:2px" width="20" height="20" viewBox="0 0 16 16" ><rect x=".5" y=".5" width="15" height="15" fill="url(#gfic)" stroke="#2a62e0"/><rect x="1" y="1" width="14" height="2.200" fill="url(#gbar)"/><path d="M4.900 13.900c1.500 0 2-1 2.500-3l1-4c.4-1.600 1-2.500 2.500-2.300M5.900 8.400h5" fill="none" stroke="#9aa0a8" stroke-width="1.100"/><path d="M4.500 13.500c1.500 0 2-1 2.500-3l1-4c.4-1.600 1-2.500 2.500-2.300M5.500 8h5" fill="none" stroke="#181c48" stroke-width="1.150"/></svg><div class="t ui fn" style="left:29.600px;top:2.300px;font-size:15px;line-height:22px;letter-spacing:0.427px;font-weight:bold;">_setvbuf</div></div>
<div class="a" style="left:0;top:288px;width:361px;height:24px;background:#ffe6ff;"><svg class="a" style="left:3px;top:2px" width="20" height="20" viewBox="0 0 16 16" ><rect x=".5" y=".5" width="15" height="15" fill="url(#gfic)" stroke="#2a62e0"/><rect x="1" y="1" width="14" height="2.200" fill="url(#gbar)"/><path d="M4.900 13.900c1.500 0 2-1 2.500-3l1-4c.4-1.600 1-2.500 2.500-2.300M5.900 8.400h5" fill="none" stroke="#9aa0a8" stroke-width="1.100"/><path d="M4.500 13.500c1.500 0 2-1 2.500-3l1-4c.4-1.600 1-2.500 2.500-2.300M5.500 8h5" fill="none" stroke="#181c48" stroke-width="1.150"/></svg><div class="t ui fn" style="left:29.600px;top:2.300px;font-size:15px;line-height:22px;letter-spacing:0.258px;font-weight:bold;">_atoi</div></div>
<div class="a" style="left:0;top:312px;width:361px;height:24px;"><svg class="a" style="left:3px;top:2px" width="20" height="20" viewBox="0 0 16 16" ><rect x=".5" y=".5" width="15" height="15" fill="url(#gfic)" stroke="#2a62e0"/><rect x="1" y="1" width="14" height="2.200" fill="url(#gbar)"/><path d="M4.900 13.900c1.500 0 2-1 2.500-3l1-4c.4-1.600 1-2.500 2.500-2.300M5.900 8.400h5" fill="none" stroke="#9aa0a8" stroke-width="1.100"/><path d="M4.500 13.500c1.500 0 2-1 2.500-3l1-4c.4-1.600 1-2.500 2.500-2.300M5.500 8h5" fill="none" stroke="#181c48" stroke-width="1.150"/></svg><div class="t ui fn" style="left:29.600px;top:2.300px;font-size:15px;line-height:22px;letter-spacing:0.865px;">start</div></div>
<div class="a" style="left:0;top:336px;width:361px;height:24px;"><svg class="a" style="left:3px;top:2px" width="20" height="20" viewBox="0 0 16 16" ><rect x=".5" y=".5" width="15" height="15" fill="url(#gfic)" stroke="#2a62e0"/><rect x="1" y="1" width="14" height="2.200" fill="url(#gbar)"/><path d="M4.900 13.900c1.500 0 2-1 2.500-3l1-4c.4-1.600 1-2.500 2.500-2.300M5.900 8.400h5" fill="none" stroke="#9aa0a8" stroke-width="1.100"/><path d="M4.500 13.500c1.500 0 2-1 2.500-3l1-4c.4-1.600 1-2.500 2.500-2.300M5.500 8h5" fill="none" stroke="#181c48" stroke-width="1.150"/></svg><div class="t ui fn" style="left:29.600px;top:2.300px;font-size:15px;line-height:22px;letter-spacing:0.526px;">sub_8049113</div></div>
<div class="a" style="left:0;top:360px;width:361px;height:24px;"><svg class="a" style="left:3px;top:2px" width="20" height="20" viewBox="0 0 16 16" ><rect x=".5" y=".5" width="15" height="15" fill="url(#gfic)" stroke="#2a62e0"/><rect x="1" y="1" width="14" height="2.200" fill="url(#gbar)"/><path d="M4.900 13.900c1.500 0 2-1 2.500-3l1-4c.4-1.600 1-2.500 2.500-2.300M5.900 8.400h5" fill="none" stroke="#9aa0a8" stroke-width="1.100"/><path d="M4.500 13.500c1.500 0 2-1 2.500-3l1-4c.4-1.600 1-2.500 2.500-2.300M5.500 8h5" fill="none" stroke="#181c48" stroke-width="1.150"/></svg><div class="t ui fn" style="left:29.600px;top:2.300px;font-size:15px;line-height:22px;letter-spacing:0.331px;">nullsub_1</div></div>
<div class="a" style="left:0;top:384px;width:361px;height:24px;"><svg class="a" style="left:3px;top:2px" width="20" height="20" viewBox="0 0 16 16" ><rect x=".5" y=".5" width="15" height="15" fill="url(#gfic)" stroke="#2a62e0"/><rect x="1" y="1" width="14" height="2.200" fill="url(#gbar)"/><path d="M4.900 13.900c1.500 0 2-1 2.500-3l1-4c.4-1.600 1-2.500 2.500-2.300M5.900 8.400h5" fill="none" stroke="#9aa0a8" stroke-width="1.100"/><path d="M4.500 13.500c1.500 0 2-1 2.500-3l1-4c.4-1.600 1-2.500 2.500-2.300M5.500 8h5" fill="none" stroke="#181c48" stroke-width="1.150"/></svg><div class="t ui fn" style="left:29.600px;top:2.300px;font-size:15px;line-height:22px;letter-spacing:0.479px;">sub_8049130</div></div>
<div class="a" style="left:0;top:408px;width:361px;height:24px;"><svg class="a" style="left:3px;top:2px" width="20" height="20" viewBox="0 0 16 16" ><rect x=".5" y=".5" width="15" height="15" fill="url(#gfic)" stroke="#2a62e0"/><rect x="1" y="1" width="14" height="2.200" fill="url(#gbar)"/><path d="M4.900 13.900c1.500 0 2-1 2.500-3l1-4c.4-1.600 1-2.500 2.500-2.300M5.900 8.400h5" fill="none" stroke="#9aa0a8" stroke-width="1.100"/><path d="M4.500 13.500c1.500 0 2-1 2.500-3l1-4c.4-1.600 1-2.500 2.500-2.300M5.500 8h5" fill="none" stroke="#181c48" stroke-width="1.150"/></svg><div class="t ui fn" style="left:29.600px;top:2.300px;font-size:15px;line-height:22px;letter-spacing:0.479px;">sub_8049140</div></div>
<div class="a" style="left:0;top:432px;width:361px;height:24px;"><svg class="a" style="left:3px;top:2px" width="20" height="20" viewBox="0 0 16 16" ><rect x=".5" y=".5" width="15" height="15" fill="url(#gfic)" stroke="#2a62e0"/><rect x="1" y="1" width="14" height="2.200" fill="url(#gbar)"/><path d="M4.900 13.900c1.500 0 2-1 2.500-3l1-4c.4-1.600 1-2.500 2.500-2.300M5.900 8.400h5" fill="none" stroke="#9aa0a8" stroke-width="1.100"/><path d="M4.500 13.500c1.500 0 2-1 2.500-3l1-4c.4-1.600 1-2.500 2.500-2.300M5.500 8h5" fill="none" stroke="#181c48" stroke-width="1.150"/></svg><div class="t ui fn" style="left:29.600px;top:2.300px;font-size:15px;line-height:22px;letter-spacing:0.431px;">nullsub_3</div></div>
<div class="a" style="left:0;top:456px;width:361px;height:24px;"><svg class="a" style="left:3px;top:2px" width="20" height="20" viewBox="0 0 16 16" ><rect x=".5" y=".5" width="15" height="15" fill="url(#gfic)" stroke="#2a62e0"/><rect x="1" y="1" width="14" height="2.200" fill="url(#gbar)"/><path d="M4.900 13.900c1.500 0 2-1 2.500-3l1-4c.4-1.600 1-2.500 2.500-2.300M5.900 8.400h5" fill="none" stroke="#9aa0a8" stroke-width="1.100"/><path d="M4.500 13.500c1.500 0 2-1 2.500-3l1-4c.4-1.600 1-2.500 2.500-2.300M5.500 8h5" fill="none" stroke="#181c48" stroke-width="1.150"/></svg><div class="t ui fn" style="left:29.600px;top:2.300px;font-size:15px;line-height:22px;letter-spacing:0.353px;">sub_80491C0</div></div>
<div class="a" style="left:0;top:480px;width:361px;height:24px;"><svg class="a" style="left:3px;top:2px" width="20" height="20" viewBox="0 0 16 16" ><rect x=".5" y=".5" width="15" height="15" fill="url(#gfic)" stroke="#2a62e0"/><rect x="1" y="1" width="14" height="2.200" fill="url(#gbar)"/><path d="M4.900 13.900c1.500 0 2-1 2.500-3l1-4c.4-1.600 1-2.500 2.500-2.300M5.900 8.400h5" fill="none" stroke="#9aa0a8" stroke-width="1.100"/><path d="M4.500 13.500c1.500 0 2-1 2.500-3l1-4c.4-1.600 1-2.500 2.500-2.300M5.500 8h5" fill="none" stroke="#181c48" stroke-width="1.150"/></svg><div class="t ui fn" style="left:29.600px;top:2.300px;font-size:15px;line-height:22px;letter-spacing:0.332px;">sub_80491F0</div></div>
<div class="a" style="left:0;top:504px;width:361px;height:24px;"><svg class="a" style="left:3px;top:2px" width="20" height="20" viewBox="0 0 16 16" ><rect x=".5" y=".5" width="15" height="15" fill="url(#gfic)" stroke="#2a62e0"/><rect x="1" y="1" width="14" height="2.200" fill="url(#gbar)"/><path d="M4.900 13.900c1.500 0 2-1 2.500-3l1-4c.4-1.600 1-2.500 2.500-2.300M5.900 8.400h5" fill="none" stroke="#9aa0a8" stroke-width="1.100"/><path d="M4.500 13.500c1.500 0 2-1 2.500-3l1-4c.4-1.600 1-2.500 2.500-2.300M5.500 8h5" fill="none" stroke="#181c48" stroke-width="1.150"/></svg><div class="t ui fn" style="left:29.600px;top:2.300px;font-size:15px;line-height:22px;letter-spacing:0.697px;">main</div></div>
<div class="a" style="left:0;top:528px;width:361px;height:24px;"><svg class="a" style="left:3px;top:2px" width="20" height="20" viewBox="0 0 16 16" ><rect x=".5" y=".5" width="15" height="15" fill="url(#gfic)" stroke="#2a62e0"/><rect x="1" y="1" width="14" height="2.200" fill="url(#gbar)"/><path d="M4.900 13.900c1.500 0 2-1 2.500-3l1-4c.4-1.600 1-2.500 2.500-2.300M5.900 8.400h5" fill="none" stroke="#9aa0a8" stroke-width="1.100"/><path d="M4.500 13.500c1.500 0 2-1 2.500-3l1-4c.4-1.600 1-2.500 2.500-2.300M5.500 8h5" fill="none" stroke="#181c48" stroke-width="1.150"/></svg><div class="t ui fn" style="left:29.600px;top:2.300px;font-size:15px;line-height:22px;letter-spacing:0.479px;">sub_8049360</div></div>
<div class="a" style="left:0;top:552px;width:361px;height:24px;"><svg class="a" style="left:3px;top:2px" width="20" height="20" viewBox="0 0 16 16" ><rect x=".5" y=".5" width="15" height="15" fill="url(#gfic)" stroke="#2a62e0"/><rect x="1" y="1" width="14" height="2.200" fill="url(#gbar)"/><path d="M4.900 13.900c1.500 0 2-1 2.500-3l1-4c.4-1.600 1-2.500 2.500-2.300M5.900 8.400h5" fill="none" stroke="#9aa0a8" stroke-width="1.100"/><path d="M4.500 13.500c1.500 0 2-1 2.500-3l1-4c.4-1.600 1-2.500 2.500-2.300M5.500 8h5" fill="none" stroke="#181c48" stroke-width="1.150"/></svg><div class="t ui fn" style="left:29.600px;top:2.300px;font-size:15px;line-height:22px;letter-spacing:0.431px;">nullsub_2</div></div>
<div class="a" style="left:0;top:576px;width:361px;height:24px;"><svg class="a" style="left:3px;top:2px" width="20" height="20" viewBox="0 0 16 16" ><rect x=".5" y=".5" width="15" height="15" fill="url(#gfic)" stroke="#2a62e0"/><rect x="1" y="1" width="14" height="2.200" fill="url(#gbar)"/><path d="M4.900 13.900c1.500 0 2-1 2.500-3l1-4c.4-1.600 1-2.500 2.500-2.300M5.900 8.400h5" fill="none" stroke="#9aa0a8" stroke-width="1.100"/><path d="M4.500 13.500c1.500 0 2-1 2.500-3l1-4c.4-1.600 1-2.500 2.500-2.300M5.500 8h5" fill="none" stroke="#181c48" stroke-width="1.150"/></svg><div class="t ui fn" style="left:29.600px;top:2.300px;font-size:15px;line-height:22px;letter-spacing:0.389px;">sub_80493D0</div></div>
</div>
<div class="a" style="left:362px;top:164px;width:20px;height:621px;background:#f0f0f0"></div>
<div class="a" style="left:362px;top:185px;width:19px;height:375px;background:#cdcdcd"></div>
<svg class="a" style="left:366px;top:171px" width="11" height="7" viewBox="0 0 11 7" ><path d="M1 6l4.500-4.500L10 6" fill="none" stroke="#606060" stroke-width="1.800"/></svg>
<svg class="a" style="left:366px;top:770px" width="11" height="7" viewBox="0 0 11 7" ><path d="M1 1l4.500 4.500L10 1" fill="none" stroke="#606060" stroke-width="1.800"/></svg>
<div class="a" style="left:1px;top:785px;width:381px;height:20px;background:#f0f0f0"></div>
<div class="a" style="left:22px;top:786px;width:86px;height:18px;background:#cdcdcd"></div>
<svg class="a" style="left:7px;top:789px" width="7" height="11" viewBox="0 0 7 11" ><path d="M6 1L1.500 5.500 6 10" fill="none" stroke="#606060" stroke-width="1.800"/></svg>
<svg class="a" style="left:347px;top:789px" width="7" height="11" viewBox="0 0 7 11" ><path d="M1 1l4.500 4.500L1 10" fill="none" stroke="#606060" stroke-width="1.800"/></svg>
<div class="t ui" id="lineof" style="left:5.800px;top:810.300px;font-size:15px;line-height:20px;letter-spacing:0.552px">Line 11 of 37</div>
<div class="a" style="left:387px;top:162px;width:1533px;height:1px;background:#a0a0a0"></div>
<div class="a" style="left:389px;top:137px;width:189px;height:25px;background:#f0f0f0;border:1px solid #d9d9d9;border-bottom:none"></div>
<svg class="a" style="left:402px;top:141px" width="16" height="16" viewBox="0 0 16 16" ><rect x=".5" y=".5" width="12" height="12" fill="url(#gdoc)" stroke="#3a8ae8"/><rect x="1" y="1" width="11" height="2.300" fill="url(#gbar)"/><rect x="5.500" y="4.500" width="10" height="11" fill="#f2f9ff" stroke="#2a5bb0"/><path d="M7.500 6.500h6M7.500 8.500h4M8.500 10.500h5M7.500 12.500h4" stroke="#4a5a7a" stroke-width="1"/></svg>
<div class="t ss" style="left:441.5px;top:140.500px;line-height:20px">IDA View-A</div>
<svg class="a" style="left:546px;top:143px" width="14" height="14" viewBox="0 0 14 14" ><rect x=".5" y=".5" width="13" height="13" rx="2" fill="#c4c4c4" stroke="#a8a8a8"/><path d="M4 4l6 6M10 4l-6 6" stroke="#fff" stroke-width="2"/></svg>
<div class="a" style="left:577px;top:135px;width:195px;height:28px;background:#fff;border:1px solid #e0e0e0;border-bottom:none"></div>
<svg class="a" style="left:594px;top:140px" width="16" height="16" viewBox="0 0 16 16" ><rect x=".5" y=".5" width="12" height="12" fill="url(#gdoc)" stroke="#3a8ae8"/><rect x="1" y="1" width="11" height="2.300" fill="url(#gbar)"/><rect x="5.500" y="4.500" width="10" height="11" fill="#f2f9ff" stroke="#2a5bb0"/><path d="M7.500 6.500h6M7.500 8.500h4M8.500 10.500h5M7.500 12.500h4" stroke="#4a5a7a" stroke-width="1"/></svg>
<div class="t ss" style="left:623px;top:139px;line-height:20px">Pseudocode-A</div>
<svg class="a" style="left:737px;top:142px" width="14" height="14" viewBox="0 0 14 14" ><rect x=".5" y=".5" width="13" height="13" rx="2" fill="#e06a4a" stroke="#d04a30"/><path d="M4 4l6 6M10 4l-6 6" stroke="#fff" stroke-width="2"/></svg>
<div class="a" style="left:771px;top:137px;width:191px;height:25px;background:#f0f0f0;border:1px solid #d9d9d9;border-bottom:none"></div>
<svg class="a" style="left:785px;top:141px" width="16" height="16" viewBox="0 0 16 16" ><rect x=".5" y=".5" width="14" height="14" fill="#f4fcff" stroke="#2a72e0"/><rect x="1" y="1" width="13" height="2.300" fill="url(#gbar)"/><path d="M7.500 4.800l3.700 2.100v4.200l-3.700 2.100-3.700-2.100V6.900z" fill="#dfe8ff" stroke="#3a3af0" stroke-width="1.100"/></svg>
<div class="t ss" style="left:823.5px;top:140.500px;line-height:20px">Hex View-1</div>
<svg class="a" style="left:929px;top:143px" width="14" height="14" viewBox="0 0 14 14" ><rect x=".5" y=".5" width="13" height="13" rx="2" fill="#c4c4c4" stroke="#a8a8a8"/><path d="M4 4l6 6M10 4l-6 6" stroke="#fff" stroke-width="2"/></svg>
<div class="a" style="left:961px;top:137px;width:193px;height:25px;background:#f0f0f0;border:1px solid #d9d9d9;border-bottom:none"></div>
<svg class="a" style="left:977px;top:141px" width="16" height="16" viewBox="0 0 16 16" ><rect x=".5" y=".5" width="14" height="14" fill="#f4fcff" stroke="#2a72e0"/><rect x="1" y="1" width="13" height="2.300" fill="url(#gbar)"/><path d="M4.500 13l3-7.500 3 7.500M5.300 11h4.400M6.300 8.300h2.400" fill="none" stroke="#1a3a80" stroke-width="1.200"/></svg>
<div class="t ss" style="left:1016px;top:140.500px;line-height:20px">Structures</div>
<svg class="a" style="left:1121px;top:143px" width="14" height="14" viewBox="0 0 14 14" ><rect x=".5" y=".5" width="13" height="13" rx="2" fill="#c4c4c4" stroke="#a8a8a8"/><path d="M4 4l6 6M10 4l-6 6" stroke="#fff" stroke-width="2"/></svg>
<div class="a" style="left:1153px;top:137px;width:192px;height:25px;background:#f0f0f0;border:1px solid #d9d9d9;border-bottom:none"></div>
<svg class="a" style="left:1169px;top:141px" width="16" height="16" viewBox="0 0 16 16" ><rect x=".5" y=".5" width="15" height="14" fill="#f4fcff" stroke="#2a72e0"/><rect x="1" y="1" width="14" height="2.300" fill="url(#gbar)"/><path d="M4.500 5.500h.1M4.500 8.500h.1M4.500 11.500h.1" stroke="#1a9ae8" stroke-width="2.400" stroke-linecap="square"/><path d="M7 5.500h4M7 8.500h4M7 11.500h4" stroke="#1a3ad0" stroke-width="1"/></svg>
<div class="t ss" style="left:1227px;top:140.500px;line-height:20px">Enums</div>
<svg class="a" style="left:1312px;top:143px" width="14" height="14" viewBox="0 0 14 14" ><rect x=".5" y=".5" width="13" height="13" rx="2" fill="#c4c4c4" stroke="#a8a8a8"/><path d="M4 4l6 6M10 4l-6 6" stroke="#fff" stroke-width="2"/></svg>
<div class="a" style="left:1344px;top:137px;width:193px;height:25px;background:#f0f0f0;border:1px solid #d9d9d9;border-bottom:none"></div>
<svg class="a" style="left:1360px;top:141px" width="16" height="16" viewBox="0 0 16 16" ><rect x=".5" y=".5" width="13" height="11" fill="#eef8ff" stroke="#2a7ae0"/><rect x="1" y="1" width="12" height="2.300" fill="url(#gbar)"/><rect x="6.500" y="6.500" width="9" height="9" fill="#fff" stroke="#2a5bb0"/><path d="M8.500 9.500h5M8.500 11.500h5M8.500 13.500h5" stroke="#1a2ac0" stroke-width="1"/><path d="M1.500 4l2.500 2V4.800h2.300l1.700 2-1.700 2H4V7.600L1.500 9.500 3.500 6.800z" fill="#20a020" stroke="#0a5a0a" stroke-width=".5"/></svg>
<div class="t ss" style="left:1411.5px;top:140.500px;line-height:20px">Imports</div>
<svg class="a" style="left:1504px;top:143px" width="14" height="14" viewBox="0 0 14 14" ><rect x=".5" y=".5" width="13" height="13" rx="2" fill="#c4c4c4" stroke="#a8a8a8"/><path d="M4 4l6 6M10 4l-6 6" stroke="#fff" stroke-width="2"/></svg>
<div class="a" style="left:1536px;top:137px;width:191px;height:25px;background:#f0f0f0;border:1px solid #d9d9d9;border-bottom:none"></div>
<svg class="a" style="left:1552px;top:141px" width="16" height="16" viewBox="0 0 16 16" ><rect x="1.500" y=".5" width="14" height="12" fill="#eef8ff" stroke="#2a7ae0"/><rect x="2" y="1" width="13" height="2.300" fill="url(#gbar)"/><rect x=".5" y="5.500" width="9" height="10" fill="#fff" stroke="#2a5bb0"/><path d="M2.500 8.500h5M2.500 10.500h5M2.500 12.500h4M2.500 14.500h4" stroke="#1a2ac0" stroke-width="1"/><path d="M7 11.500c0-3 2-4.300 4.300-4.300V5l3.200 3.200-3.200 3.200V9.300c-1.800 0-3.300.5-4.300 2.200z" fill="#20a020" stroke="#0a5a0a" stroke-width=".5"/></svg>
<div class="t ss" style="left:1602px;top:140.500px;line-height:20px">Exports</div>
<svg class="a" style="left:1695px;top:143px" width="14" height="14" viewBox="0 0 14 14" ><rect x=".5" y=".5" width="13" height="13" rx="2" fill="#c4c4c4" stroke="#a8a8a8"/><path d="M4 4l6 6M10 4l-6 6" stroke="#fff" stroke-width="2"/></svg>
<div class="a" style="left:387px;top:163px;width:47px;height:668px;background:#fff"></div>
<div class="a" style="left:433px;top:163px;width:1487px;height:668px;background:#fff;border:1px solid #0078d7"></div>
<div class="a" style="left:1899px;top:164px;width:20px;height:666px;background:#f0f0f0"></div>
<div class="a" style="left:1899px;top:185px;width:19px;height:539px;background:#cdcdcd"></div>
<svg class="a" style="left:1903px;top:171px" width="11" height="7" viewBox="0 0 11 7" ><path d="M1 6l4.500-4.500L10 6" fill="none" stroke="#606060" stroke-width="1.800"/></svg>
<svg class="a" style="left:1903px;top:816px" width="11" height="7" viewBox="0 0 11 7" ><path d="M1 1l4.500 4.500L10 1" fill="none" stroke="#606060" stroke-width="1.800"/></svg>
<div class="a" style="left:434px;top:808px;width:1465px;height:22px;background:#f0f0f0"></div>
<div class="t mono" id="edst1" style="left:437px;top:810px;font-size:14.700px;line-height:20px">00001336</div>
<div class="t mono" id="edst2" style="left:514px;top:810px;font-size:14.700px;line-height:20px">main:27 (8049336)</div>
<div class="a" style="left:509px;top:810px;width:1px;height:18px;background:#d4d4d4"></div>
<div class="a" style="left:668px;top:810px;width:1px;height:18px;background:#d4d4d4"></div>
<div class="a" style="left:683px;top:810px;width:1px;height:18px;background:#d4d4d4"></div>
<div class="a" style="left:434px;top:684px;width:1465px;height:20px;background:#e4e4e4"></div>
<div class="a" style="left:434px;top:684px;width:207px;height:20px;background:#aca899"></div>
<div class="t code G" style="left:394px;top:166px;width:36.800px;text-align:right">1</div>
<div class="t code" style="left:434px;top:166px"><span class="G">int __cdecl main</span><span class="N">(</span><span class="G">int a1</span><span class="N">)</span></div>
<div class="t code G" style="left:394px;top:186px;width:36.800px;text-align:right">2</div>
<div class="t code" style="left:434px;top:186px"><span class="N">{</span></div>
<div class="t code G" style="left:394px;top:206px;width:36.800px;text-align:right">3</div>
<div class="t code" style="left:434px;top:206px"><span class="N">  unsigned int v1; </span><span class="B">// </span><span class="P">eax</span></div>
<div class="t code G" style="left:394px;top:226px;width:36.800px;text-align:right">4</div>
<div class="t code" style="left:434px;top:226px"><span class="G">  int result</span><span class="N">; </span><span class="B">// </span><span class="P">eax</span></div>
<div class="t code G" style="left:394px;top:246px;width:36.800px;text-align:right">5</div>
<div class="t code" style="left:434px;top:246px"><span class="N">  int fd; </span><span class="B">// </span><span class="P">[esp+0h] [ebp-84h]</span></div>
<div class="t code G" style="left:394px;top:266px;width:36.800px;text-align:right">6</div>
<div class="t code" style="left:434px;top:266px"><span class="N">  char nptr[16]; </span><span class="B">// </span><span class="P">[esp+4h] [ebp-80h] BYREF</span></div>
<div class="t code G" style="left:394px;top:286px;width:36.800px;text-align:right">7</div>
<div class="t code" style="left:434px;top:286px"><span class="G">  char buf</span><span class="N">[</span><span class="G">100</span><span class="N">]; </span><span class="B">// </span><span class="P">[esp+14h] [ebp-70h] BYREF</span></div>
<div class="t code G" style="left:394px;top:306px;width:36.800px;text-align:right">8</div>
<div class="t code" style="left:434px;top:306px"><span class="N">  unsigned int v6; </span><span class="B">// </span><span class="P">[esp+78h] [ebp-Ch]</span></div>
<div class="t code G" style="left:394px;top:326px;width:36.800px;text-align:right">9</div>
<div class="t code" style="left:434px;top:326px"><span class="N">  int *v7; </span><span class="B">// </span><span class="P">[esp+7Ch] [ebp-8h]</span></div>
<div class="t code G" style="left:394px;top:346px;width:36.800px;text-align:right">10</div>
<div class="t code G" style="left:394px;top:366px;width:36.800px;text-align:right">11</div>
<div class="a" style="left:394px;top:368px;width:12px;height:12px;border-radius:6px;background:#5fcdff"></div>
<div class="t code" style="left:434px;top:366px"><span class="P">  v7</span><span class="N"> = &amp;</span><span class="Q">a1</span><span class="N">;</span></div>
<div class="t code G" style="left:394px;top:386px;width:36.800px;text-align:right">12</div>
<div class="a" style="left:394px;top:388px;width:12px;height:12px;border-radius:6px;background:#5fcdff"></div>
<div class="t code" style="left:434px;top:386px"><span class="P">  v6</span><span class="N"> = </span><span class="B">__readgsdword</span><span class="N">(0x14u);</span></div>
<div class="t code G" style="left:394px;top:406px;width:36.800px;text-align:right">13</div>
<div class="a" style="left:394px;top:408px;width:12px;height:12px;border-radius:6px;background:#5fcdff"></div>
<div class="t code" style="left:434px;top:406px"><span class="B">  setvbuf</span><span class="N">(</span><span class="M">stdout</span><span class="N">, 0, 2, 0);</span></div>
<div class="t code G" style="left:394px;top:426px;width:36.800px;text-align:right">14</div>
<div class="a" style="left:394px;top:428px;width:12px;height:12px;border-radius:6px;background:#5fcdff"></div>
<div class="t code" style="left:434px;top:426px"><span class="P">  v1</span><span class="N"> = </span><span class="B">time</span><span class="N">(0);</span></div>
<div class="t code G" style="left:394px;top:446px;width:36.800px;text-align:right">15</div>
<div class="a" style="left:394px;top:448px;width:12px;height:12px;border-radius:6px;background:#5fcdff"></div>
<div class="t code" style="left:434px;top:446px"><span class="B">  srand</span><span class="N">(</span><span class="Q">v1</span><span class="N">);</span></div>
<div class="t code G" style="left:394px;top:466px;width:36.800px;text-align:right">16</div>
<div class="a" style="left:394px;top:468px;width:12px;height:12px;border-radius:6px;background:#5fcdff"></div>
<div class="t code" style="left:434px;top:466px"><span class="P">  fd</span><span class="N"> = </span><span class="B">open</span><span class="N">(&quot;</span><span class="S">/dev/urandom</span><span class="N">&quot;, 0);</span></div>
<div class="t code G" style="left:394px;top:486px;width:36.800px;text-align:right">17</div>
<div class="a" style="left:394px;top:488px;width:12px;height:12px;border-radius:6px;background:#5fcdff"></div>
<div class="t code" style="left:434px;top:486px"><span class="B">  read</span><span class="N">(</span><span class="Q">fd</span><span class="N">, &amp;</span><span class="B">dword_804C044</span><span class="N">, 4u);</span></div>
<div class="t code G" style="left:394px;top:506px;width:36.800px;text-align:right">18</div>
<div class="a" style="left:394px;top:508px;width:12px;height:12px;border-radius:6px;background:#5fcdff"></div>
<div class="t code" style="left:434px;top:506px"><span class="B">  printf</span><span class="N">(&quot;</span><span class="S">your name:</span><span class="N">&quot;);</span></div>
<div class="t code G" style="left:394px;top:526px;width:36.800px;text-align:right">19</div>
<div class="a" style="left:394px;top:528px;width:12px;height:12px;border-radius:6px;background:#5fcdff"></div>
<div class="t code" style="left:434px;top:526px"><span class="B">  read</span><span class="N">(0, </span><span class="P">buf</span><span class="N">, 0x63u);</span></div>
<div class="t code G" style="left:394px;top:546px;width:36.800px;text-align:right">20</div>
<div class="a" style="left:394px;top:548px;width:12px;height:12px;border-radius:6px;background:#5fcdff"></div>
<div class="t code" style="left:434px;top:546px"><span class="B">  printf</span><span class="N">(&quot;</span><span class="S">Hello,</span><span class="N">&quot;);</span></div>
<div class="t code G" style="left:394px;top:566px;width:36.800px;text-align:right">21</div>
<div class="a" style="left:394px;top:568px;width:12px;height:12px;border-radius:6px;background:#5fcdff"></div>
<div class="t code" style="left:434px;top:566px"><span class="B">  printf</span><span class="N">(</span><span class="P">buf</span><span class="N">);</span></div>
<div class="t code G" style="left:394px;top:586px;width:36.800px;text-align:right">22</div>
<div class="a" style="left:394px;top:588px;width:12px;height:12px;border-radius:6px;background:#5fcdff"></div>
<div class="t code" style="left:434px;top:586px"><span class="B">  printf</span><span class="N">(&quot;</span><span class="S">your passwd:</span><span class="N">&quot;);</span></div>
<div class="t code G" style="left:394px;top:606px;width:36.800px;text-align:right">23</div>
<div class="a" style="left:394px;top:608px;width:12px;height:12px;border-radius:6px;background:#5fcdff"></div>
<div class="t code" style="left:434px;top:606px"><span class="B">  read</span><span class="N">(0, </span><span class="P">nptr</span><span class="N">, 0xFu);</span></div>
<div class="t code G" style="left:394px;top:626px;width:36.800px;text-align:right">24</div>
<div class="a" style="left:394px;top:628px;width:12px;height:12px;border-radius:6px;background:#5fcdff"></div>
<div class="t code" style="left:434px;top:626px"><span class="N">  if ( </span><span class="B">atoi</span><span class="N">(</span><span class="P">nptr</span><span class="N">) == </span><span class="B">dword_804C044</span><span class="N"> )</span></div>
<div class="t code G" style="left:394px;top:646px;width:36.800px;text-align:right">25</div>
<div class="t code" style="left:434px;top:646px"><span class="N">  {</span></div>
<div class="t code G" style="left:394px;top:666px;width:36.800px;text-align:right">26</div>
<div class="a" style="left:394px;top:668px;width:12px;height:12px;border-radius:6px;background:#5fcdff"></div>
<div class="t code" style="left:434px;top:666px"><span class="B">    puts</span><span class="N">(&quot;</span><span class="S">ok!!</span><span class="N">&quot;);</span></div>
<div class="t code G" style="left:394px;top:686px;width:36.800px;text-align:right">27</div>
<div class="a" style="left:394px;top:688px;width:12px;height:12px;border-radius:6px;background:#5fcdff"></div>
<div class="t code" style="left:434px;top:686px"><span class="W">    system(&quot;/bin/sh&quot;);</span></div>
<div class="t code G" style="left:394px;top:706px;width:36.800px;text-align:right">28</div>
<div class="t code" style="left:434px;top:706px"><span class="N">  }</span></div>
<div class="t code G" style="left:394px;top:726px;width:36.800px;text-align:right">29</div>
<div class="t code" style="left:434px;top:726px"><span class="N">  else</span></div>
<div class="t code G" style="left:394px;top:746px;width:36.800px;text-align:right">30</div>
<div class="t code" style="left:434px;top:746px"><span class="N">  {</span></div>
<div class="t code G" style="left:394px;top:766px;width:36.800px;text-align:right">31</div>
<div class="a" style="left:394px;top:768px;width:12px;height:12px;border-radius:6px;background:#5fcdff"></div>
<div class="t code" style="left:434px;top:766px"><span class="B">    puts</span><span class="N">(&quot;</span><span class="S">fail</span><span class="N">&quot;);</span></div>
<div class="t code G" style="left:394px;top:786px;width:36.800px;text-align:right">32</div>
<div class="t code" style="left:434px;top:786px"><span class="N">  }</span></div>
<div class="a" style="left:0px;top:835px;width:1920px;height:26px;background:#f0f0f0;border:1px solid #a0a0a0"></div>
<div class="a" style="left:1px;top:836px;width:1917px;height:24px;border:1px solid #fff;border-right:none;border-bottom:none"></div>
<svg class="a" style="left:4px;top:840px" width="14" height="15" viewBox="0 0 14 15" ><rect x=".5" y=".5" width="13" height="14" fill="#fff" stroke="#5a7ab0"/><rect x="1" y="1" width="12" height="2.500" fill="#2a5fd0"/><path d="M3 6.500h8M3 8.500h8M3 10.500h8M3 12.500h8" stroke="#7a86a0" stroke-width=".8"/></svg>
<div class="t ss" style="left:26px;top:838px;line-height:20px">Output window</div>
<svg class="a" style="left:1848px;top:845px" width="9" height="9" viewBox="0 0 9 9" ><path d="M1 1.500h7M.5 1v8h8V1" fill="none" stroke="#000" stroke-width="1"/><path d="M0 1h9" stroke="#000" stroke-width="2"/></svg>
<svg class="a" style="left:1876px;top:845px" width="9" height="9" viewBox="0 0 9 9" ><path d="M.5 3.500h5v5h-5zM2.500 3.500v-3h6v5h-3" fill="none" stroke="#000" stroke-width="1"/><path d="M2 1h7M0 4h6" stroke="#000" stroke-width="2"/></svg>
<svg class="a" style="left:1903px;top:845px" width="9" height="9" viewBox="0 0 9 9" ><path d="M1 1l7 7M8 1L1 8" stroke="#000" stroke-width="1.600"/></svg>
<div class="a" style="left:0px;top:863px;width:1920px;height:117px;background:#fff;border:1px solid #828790"></div>
<div class="a" style="left:1899px;top:864px;width:20px;height:115px;background:#f0f0f0"></div>
<div class="a" style="left:1899px;top:937px;width:19px;height:22px;background:#cdcdcd"></div>
<svg class="a" style="left:1903px;top:871px" width="11" height="7" viewBox="0 0 11 7" ><path d="M1 6l4.500-4.500L10 6" fill="none" stroke="#606060" stroke-width="1.800"/></svg>
<svg class="a" style="left:1903px;top:965px" width="11" height="7" viewBox="0 0 11 7" ><path d="M1 1l4.500 4.500L10 1" fill="none" stroke="#606060" stroke-width="1.800"/></svg>
<div class="a" style="left:1px;top:864px;width:1898px;height:115px;overflow:hidden">
<div class="t code" style="left:6.700px;top:-3px;color:#000">Function argument information has been propagated</div>
<div class="t code" style="left:6.700px;top:17px;color:#000">The initial autoanalysis has been finished.</div>
<div class="t code" style="left:6.700px;top:37px;color:#000">80490E3: positive sp value 4 has been found</div>
<div class="t code" style="left:6.700px;top:57px;color:#000">8049360: using guessed type int __cdecl sub_8049360(int, int, int);</div>
<div class="t code" style="left:6.700px;top:77px;color:#000">80493C0: using guessed type int nullsub_2();</div>
<div class="t code" style="left:6.700px;top:97px;color:#000">80493D0: using guessed type int sub_80493D0(void);</div>
</div>
<div class="a" style="left:2px;top:982px;width:62px;height:24px;background:#e1e1e1;border:1px solid #adadad"></div>
<div class="t ss" style="left:22px;top:984.300px;line-height:20px">IDC</div>
<div class="a" style="left:68px;top:981px;width:1850px;height:26px;background:#fff;border:1px solid #7a7a7a"></div>
<div class="a" style="left:0;top:937px;width:18px;height:53px;background:rgba(0,0,0,.73);border-radius:0 3px 3px 0"></div>
<div class="a" style="left:6px;top:944px;width:6px;height:38px;background:repeating-linear-gradient(rgba(150,150,150,.55) 0 1px,transparent 1px 2px)"></div>
<div class="a" style="left:6px;top:960px;width:6px;height:1px;background:#f0a030"></div>
<div class="a" style="left:6px;top:983px;width:6px;height:1px;background:#70e020"></div>
<div class="t mono" id="st1" style="top:1010.700px;letter-spacing:1.200px;left:2px;font-size:13px;line-height:20px">AU:  idle</div>
<div class="t mono" id="st2" style="top:1010.700px;letter-spacing:1.200px;left:107px;font-size:13px;line-height:20px">Down</div>
<div class="t mono" id="st3" style="top:1010.700px;letter-spacing:1.200px;left:183px;font-size:13px;line-height:20px">Disk: 34GB</div>
<div class="a" style="left:102px;top:1011px;width:1px;height:18px;background:#d8d8d8"></div>
<div class="a" style="left:178px;top:1011px;width:1px;height:18px;background:#d8d8d8"></div>
<div class="a" style="left:274px;top:1011px;width:1px;height:18px;background:#d8d8d8"></div>
</body></html>
